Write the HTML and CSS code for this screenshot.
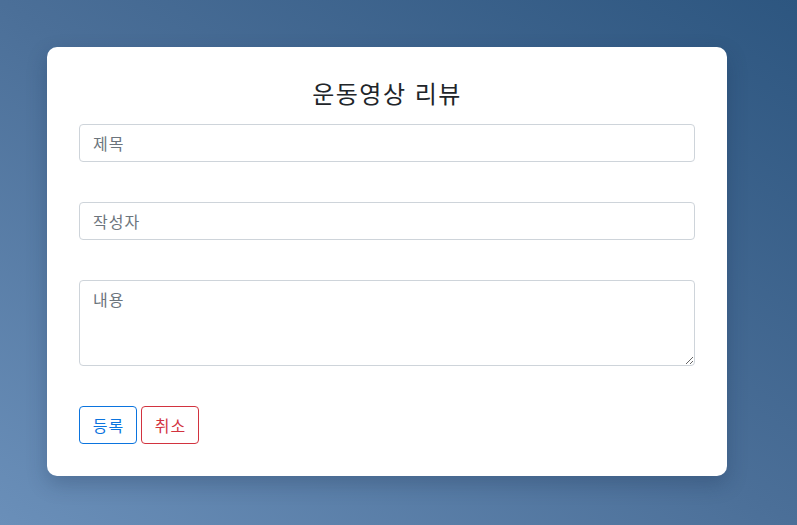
FILE: index.html
```html
<!DOCTYPE html>
<html lang="ko">
<head>
<meta charset="utf-8">
<title>운동영상 리뷰</title>
<link rel="stylesheet" href="styles.css">
</head>
<body>
<div class="card">
  <h3 class="title">운동영상 리뷰</h3>
  <form class="form">
    <input class="control" type="text" placeholder="제목">
    <input class="control" type="text" placeholder="작성자">
    <textarea class="control area" rows="3" placeholder="내용"></textarea>
    <div class="actions">
      <button type="button" class="btn btn-primary">등록</button>
      <button type="button" class="btn btn-danger">취소</button>
    </div>
  </form>
</div>
</body>
</html>
```

FILE: styles.css
```css
html, body {
  height: 100%;
}
body {
  margin: 0;
  padding: 47px 0 0 47px;
  box-sizing: border-box;
  background: linear-gradient(to top right, #6a8fb9 0%, #4b6f98 50%, #2d5680 100%);
  font-family: "Noto Sans CJK KR", "Noto Sans", sans-serif;
  color: #212529;
}
.card {
  width: 680px;
  box-sizing: border-box;
  padding: 32px;
  background: #fff;
  border-radius: 10px;
  box-shadow: 0 8px 20px rgba(20, 40, 70, 0.25);
}
.title {
  margin: 0 0 16px;
  font-size: 24px;
  font-weight: 400;
  letter-spacing: 1.5px;
  line-height: 28.8px;
  text-align: center;
}
.form {
  display: flex;
  flex-direction: column;
  gap: 40px;
}
.control {
  display: block;
  width: 100%;
  box-sizing: border-box;
  height: 38px;
  padding: 6px 13px;
  font-family: inherit;
  font-size: 16px;
  letter-spacing: 1px;
  line-height: 24px;
  color: #495057;
  background: #fff;
  border: 1px solid #ced4da;
  border-radius: 4px;
  margin: 0;
}
.control::placeholder {
  color: #6c757d;
}
.area {
  height: 86px;
  resize: vertical;
}
.actions {
  display: flex;
  gap: 4px;
}
.btn {
  box-sizing: border-box;
  width: 58px;
  height: 38px;
  padding: 6px 0 6px 1px;
  text-align: center;
  font-family: inherit;
  font-size: 16px;
  letter-spacing: 1px;
  line-height: 24px;
  background: transparent;
  border-radius: 4px;
  border: 1px solid;
  cursor: pointer;
}
.btn-primary {
  color: #0b74de;
  border-color: #0b74de;
}
.btn-danger {
  color: #d2333f;
  border-color: #d2333f;
}
```
